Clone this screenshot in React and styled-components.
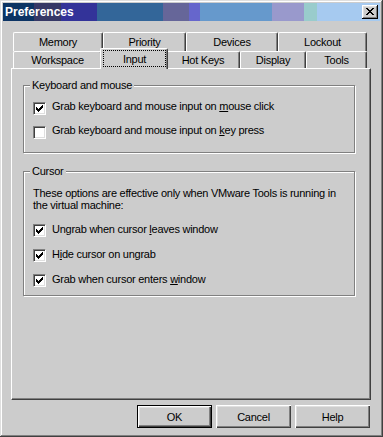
import React from 'react';
import styled, { createGlobalStyle } from 'styled-components';

const Global = createGlobalStyle`
  html, body { margin: 0; padding: 0; background: #cccccc; }
  body { font-family: "Liberation Sans", Arial, sans-serif; font-size: 11px; color: #000; }
  * { box-sizing: border-box; }
`;

const Window = styled.div`
  width: 383px;
  height: 437px;
  padding: 3px;
  background: #cccccc;
  display: flex;
  flex-direction: column;
  box-shadow: inset -1px -1px #404040, inset 1px 1px #dfdfdf,
    inset -2px -2px #808080, inset 2px 2px #ffffff;
`;

const TitleBar = styled.div`
  height: 18px;
  width: 377px;
  display: flex;
  align-items: center;
  justify-content: space-between;
  padding: 0 2px;
  background: linear-gradient(to right,
    #0c3464 0 31px, #363866 31px 58px, #333399 58px 94px, #336699 94px 160px,
    #666699 160px 186px, #6666cc 186px 197px, #6699cc 197px 269px,
    #9999cc 269px 301px, #99cccc 301px 314px, #a6caf0 314px);
`;

const Title = styled.span`
  color: #fff;
  font-weight: bold;
  font-size: 12px;
  line-height: 14px;
`;

const CloseButton = styled.div`
  width: 16px;
  height: 14px;
  background: #cccccc;
  display: flex;
  align-items: center;
  justify-content: center;
  box-shadow: inset -1px -1px #000, inset 1px 1px #fff,
    inset -2px -2px #808080, inset 2px 2px #dfdfdf;
  svg { display: block; margin: 0 0 1px 0; }
`;

const Content = styled.div`
  padding: 11px 9px 0 8px;
  display: flex;
  flex-direction: column;
`;

const TabStrip = styled.div`
  padding-left: 2px;
  display: flex;
  flex-direction: column;
`;

const TabRow = styled.div`
  display: flex;
  height: ${p => p.$h}px;
`;

const Tab = styled.div`
  width: ${p => p.$w}px;
  height: ${p => (p.$selected ? 21 : p.$h)}px;
  margin: ${p => (p.$selected ? '-3px -2px -1px -2px' : '0')};
  ${p => p.$selected && 'width: ' + (p.$w + 4) + 'px; position: relative; z-index: 1; padding: 1px 2px 2px 2px;'}
  background: #cccccc;
  border-top: 1px solid #fff;
  border-left: 1px solid #fff;
  border-right: 1px solid #404040;
  box-shadow: inset -1px 0 #808080;
  border-radius: 2px 2px 0 0;
  display: flex;
  align-items: center;
  justify-content: center;
  letter-spacing: -0.25px;
  line-height: 12px;
`;

const FocusRing = styled.span`
  flex: 1;
  align-self: stretch;
  border: 1px dotted #000;
  display: flex;
  align-items: center;
  justify-content: center;
  margin-right: -1px;
`;

const Panel = styled.div`
  width: 360px;
  height: 332px;
  border-top: 1px solid #fff;
  border-left: 1px solid #fff;
  border-right: 1px solid #404040;
  border-bottom: 1px solid #404040;
  box-shadow: inset -1px -1px #808080;
  padding: 16px 0 0 11px;
  display: flex;
  flex-direction: column;
`;

const Group = styled.div`
  position: relative;
  width: 332px;
  height: ${p => p.$h}px;
  margin-top: ${p => p.$mt || 0}px;
  border: 1px solid #808080;
  box-shadow: inset 1px 1px #fff, 1px 1px #fff;
  padding: ${p => p.$pt}px 0 0 9px;
  display: flex;
  flex-direction: column;
`;

const GroupLabel = styled.span`
  position: absolute;
  top: -7px;
  left: 6px;
  padding: 0 2px;
  background: #cccccc;
  line-height: 12px;
  letter-spacing: -0.25px;
`;

const Rows = styled.div`
  display: flex;
  flex-direction: column;
  gap: ${p => p.$gap}px;
  margin-top: ${p => p.$mt || 0}px;
`;

const Note = styled.p`
  margin: 0;
  line-height: 12px;
  letter-spacing: -0.25px;
`;

const CheckRow = styled.label`
  display: flex;
  align-items: flex-start;
  gap: 6px;
  height: 13px;
`;

const Box = styled.span`
  width: 13px;
  height: 13px;
  flex: none;
  background: #fff;
  border-top: 1px solid #808080;
  border-left: 1px solid #808080;
  border-right: 1px solid #fff;
  border-bottom: 1px solid #fff;
  box-shadow: inset 1px 1px #404040, inset -1px -1px #dfdfdf;
  display: flex;
  align-items: center;
  justify-content: center;
  svg { display: block; }
`;

const CheckText = styled.span`
  line-height: 12px;
  margin-top: ${p => p.$mt}px;
  letter-spacing: -0.25px;
  white-space: nowrap;
`;

const ButtonRow = styled.div`
  display: flex;
  justify-content: flex-end;
  gap: 4px;
  margin-top: 5px;
  padding-right: 1px;
`;

const Button = styled.div`
  width: 75px;
  height: 23px;
  display: flex;
  align-items: center;
  justify-content: center;
  letter-spacing: -0.25px;
  border: ${p => (p.$default ? '1px solid #000' : 'none')};
  box-shadow: inset 1px 1px #fff, inset -1px -1px #404040,
    inset -2px -2px #808080, inset 2px 2px #dfdfdf;
`;

const CheckMark = () => {
  const cols = [2, 3, 4, 3, 2, 1, 0];
  return (
    <svg width="7" height="7" viewBox="0 0 7 7" shapeRendering="crispEdges">
      {cols.map((y, x) => (
        <rect key={x} x={x} y={y} width="1" height="3" fill="#000" />
      ))}
    </svg>
  );
};

const CloseX = () => {
  const rows = ['XX....XX', '.XX..XX.', '..XXXX..', '...XX...', '..XXXX..', '.XX..XX.', 'XX....XX'];
  return (
    <svg width="8" height="7" viewBox="0 0 8 7" shapeRendering="crispEdges">
      {rows.map((r, y) =>
        r.split('').map((c, x) =>
          c === 'X' ? <rect key={x + '-' + y} x={x} y={y} width="1" height="1" fill="#000" /> : null
        )
      )}
    </svg>
  );
};

const Check = ({ checked, children, mt }) => (
  <CheckRow>
    <Box>{checked && <CheckMark />}</Box>
    <CheckText $mt={mt}>{children}</CheckText>
  </CheckRow>
);

const backTabs = [
  ['Memory', 90],
  ['Priority', 83],
  ['Devices', 92],
  ['Lockout', 89],
];

const frontTabs = [
  ['Workspace', 89],
  ['Input', 64],
  ['Hot Keys', 74],
  ['Display', 66],
  ['Tools', 61],
];

export default function App() {
  return (
    <>
      <Global />
      <Window>
        <TitleBar>
          <Title>Preferences</Title>
          <CloseButton>
            <CloseX />
          </CloseButton>
        </TitleBar>
        <Content>
          <TabStrip>
            <TabRow $h={19}>
              {backTabs.map(([name, w]) => (
                <Tab key={name} $w={w} $h={19}>{name}</Tab>
              ))}
            </TabRow>
            <TabRow $h={17}>
              {frontTabs.map(([name, w]) =>
                name === 'Input' ? (
                  <Tab key={name} $w={w} $h={17} $selected>
                    <FocusRing>{name}</FocusRing>
                  </Tab>
                ) : (
                  <Tab key={name} $w={w} $h={17}>{name}</Tab>
                )
              )}
            </TabRow>
          </TabStrip>
          <Panel>
            <Group $h={68} $pt={16}>
              <GroupLabel>Keyboard and mouse</GroupLabel>
              <Rows $gap={11}>
                <Check checked mt={-2}>Grab keyboard and mouse input on <u>m</u>ouse click</Check>
                <Check mt={-2}>Grab keyboard and mouse input on <u>k</u>ey press</Check>
              </Rows>
            </Group>
            <Group $h={125} $mt={18} $pt={15}>
              <GroupLabel>Cursor</GroupLabel>
              <Note>
                These options are effective only when VMware Tools is running in
                <br />
                the virtual machine:
              </Note>
              <Rows $gap={12} $mt={13}>
                <Check checked mt={-1}>Ungrab when cursor <u>l</u>eaves window</Check>
                <Check checked mt={-1}>H<u>i</u>de cursor on ungrab</Check>
                <Check checked mt={-1}>Grab when cursor enters <u>w</u>indow</Check>
              </Rows>
            </Group>
          </Panel>
          <ButtonRow>
            <Button $default>OK</Button>
            <Button>Cancel</Button>
            <Button>Help</Button>
          </ButtonRow>
        </Content>
      </Window>
    </>
  );
}
